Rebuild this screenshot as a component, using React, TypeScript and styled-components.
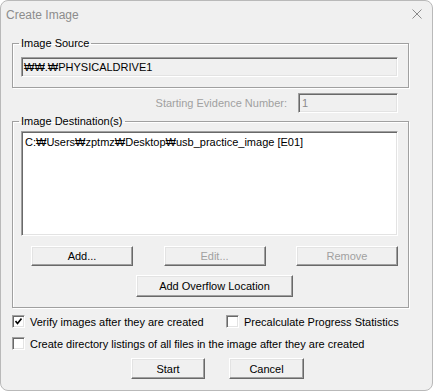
import * as React from "react";
import styled, { createGlobalStyle } from "styled-components";

const GlobalStyle = createGlobalStyle`
  html, body {
    margin: 0;
    padding: 0;
    background: #ffffff;
  }
  body {
    font-family: "Liberation Sans", Arial, sans-serif;
    font-size: 11px;
    color: #000;
  }
`;

const Window = styled.div`
  box-sizing: border-box;
  width: 433px;
  height: 391px;
  border: 1px solid #b9b9b9;
  border-radius: 8px;
  background: #f0f0f0;
  overflow: hidden;
  display: flex;
  flex-direction: column;
`;

const TitleBar = styled.div`
  height: 27px;
  display: flex;
  align-items: center;
  justify-content: space-between;
  padding: 0 10px 0 5px;
`;

const Title = styled.span`
  font-size: 12px;
  color: #8c8c8c;
`;

const CloseIcon = styled.svg`
  width: 10px;
  height: 10px;
  margin-top: -1px;
`;

const Body = styled.div`
  display: flex;
  flex-direction: column;
  padding: 8px 23px 0 11px;
`;

const Group = styled.fieldset`
  margin: 0;
  min-width: 0;
  padding: 0 10px 10px 8px;
  border: 1px solid #a0a0a0;
  box-shadow: inset 1px 1px 0 #ffffff, 1px 1px 0 #ffffff;
  display: flex;
  flex-direction: column;
`;

const Legend = styled.legend`
  padding: 0 2px;
  margin-left: -2px;
  line-height: 14px;
  font-size: 11px;
`;

const Sunken = styled.div<{ $white?: boolean; $muted?: boolean }>`
  box-sizing: border-box;
  border: 1px solid;
  border-color: #a0a0a0 #ffffff #ffffff #a0a0a0;
  box-shadow: inset 1px 1px 0 #696969, inset -1px -1px 0 #e3e3e3;
  background: ${(p) => (p.$white ? "#ffffff" : "#f0f0f0")};
  color: ${(p) => (p.$muted ? "#8a8a8a" : "#000")};
  padding: 0 0 0 2px;
  line-height: 14px;
  white-space: nowrap;
`;

const SourceField = styled(Sunken)`
  margin-top: 7px;
  height: 20px;
  display: flex;
  align-items: center;
`;

const EvidenceRow = styled.div`
  margin-top: 5px;
  display: flex;
  justify-content: flex-end;
  align-items: center;
  gap: 11px;
  padding-right: 11px;
`;

const MutedLabel = styled.span`
  color: #a0a0a0;
`;

const EvidenceField = styled(Sunken)`
  width: 100px;
  height: 20px;
  display: flex;
  align-items: center;
  padding-left: 3px;
`;

const DestGroup = styled(Group)`
  margin-top: 1px;
`;

const ListBox = styled(Sunken)`
  margin-top: 3px;
  height: 105px;
  padding: 3px 0 0 3px;
`;

const ButtonRow = styled.div`
  margin-top: 10px;
  display: flex;
  justify-content: space-between;
  padding-left: 10px;
`;

const Button = styled.button<{ $w: number; $h?: number }>`
  box-sizing: border-box;
  width: ${(p) => p.$w}px;
  height: ${(p) => p.$h ?? 20}px;
  margin: 0;
  padding: 0;
  font-family: "Liberation Sans", Arial, sans-serif;
  font-size: 11px;
  color: #000;
  background: #f0f0f0;
  border: 1px solid;
  border-color: #ffffff #696969 #696969 #ffffff;
  box-shadow: inset -1px -1px 0 #a0a0a0, inset 1px 1px 0 #e3e3e3;
  border-radius: 0;

  &:disabled {
    color: #a0a0a0;
  }
`;

const OverflowButton = styled(Button)`
  margin-top: 9px;
  margin-left: 115px;
`;

const OptionsGrid = styled.div`
  margin-top: 7px;
  display: grid;
  grid-template-columns: 214px auto;
  row-gap: 9px;
`;

const CheckRow = styled.label<{ $span?: boolean }>`
  display: flex;
  align-items: center;
  gap: 5px;
  height: 13px;
  grid-column: ${(p) => (p.$span ? "1 / span 2" : "auto")};
`;

const Box = styled.span`
  box-sizing: border-box;
  width: 13px;
  height: 13px;
  flex: none;
  background: #ffffff;
  border: 1px solid;
  border-color: #a0a0a0 #ffffff #ffffff #a0a0a0;
  box-shadow: inset 1px 1px 0 #696969, inset -1px -1px 0 #e3e3e3;
  display: flex;
  align-items: center;
  justify-content: center;
`;

const Footer = styled.div`
  margin-top: 8px;
  display: flex;
  gap: 24px;
  padding-left: 119px;
`;

function CheckBox({ checked, label, span }: { checked?: boolean; label: string; span?: boolean }) {
  return (
    <CheckRow $span={span}>
      <Box>
        {checked && (
          <svg width="7" height="7" viewBox="0 0 7 7">
            <polyline points="0.5,3 2.5,5.5 6.5,0.5" fill="none" stroke="#000" strokeWidth="1.6" />
          </svg>
        )}
      </Box>
      <span>{label}</span>
    </CheckRow>
  );
}

export default function App() {
  return (
    <>
      <GlobalStyle />
      <Window>
        <TitleBar>
          <Title>Create Image</Title>
          <CloseIcon viewBox="0 0 10 10">
            <path d="M0.5 0.5 L9.5 9.5 M9.5 0.5 L0.5 9.5" stroke="#8a8a8a" strokeWidth="1" />
          </CloseIcon>
        </TitleBar>
        <Body>
          <Group>
            <Legend>Image Source</Legend>
            <SourceField>₩₩.₩PHYSICALDRIVE1</SourceField>
          </Group>

          <EvidenceRow>
            <MutedLabel>Starting Evidence Number:</MutedLabel>
            <EvidenceField $muted>1</EvidenceField>
          </EvidenceRow>

          <DestGroup>
            <Legend>Image Destination(s)</Legend>
            <ListBox $white>C:₩Users₩zptmz₩Desktop₩usb_practice_image [E01]</ListBox>
            <ButtonRow>
              <Button $w={102}>Add...</Button>
              <Button $w={102} disabled>
                Edit...
              </Button>
              <Button $w={102} disabled>
                Remove
              </Button>
            </ButtonRow>
            <OverflowButton $w={157} $h={22}>
              Add Overflow Location
            </OverflowButton>
          </DestGroup>

          <OptionsGrid>
            <CheckBox checked label="Verify images after they are created" />
            <CheckBox label="Precalculate Progress Statistics" />
            <CheckBox span label="Create directory listings of all files in the image after they are created" />
          </OptionsGrid>

          <Footer>
            <Button $w={74} $h={21}>
              Start
            </Button>
            <Button $w={75} $h={21}>
              Cancel
            </Button>
          </Footer>
        </Body>
      </Window>
    </>
  );
}
